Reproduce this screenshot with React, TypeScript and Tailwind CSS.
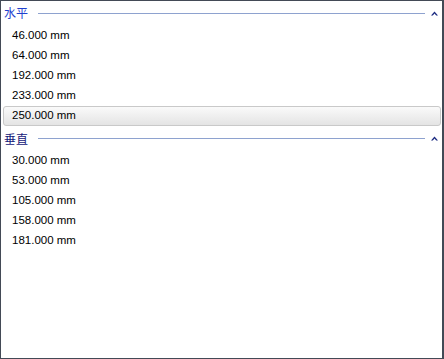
import React from "react";

const Chevron = () => (
  <svg width="7" height="5" viewBox="0 0 7 5" className="shrink-0">
    <path d="M0 4.5 L3.5 0.5 L7 4.5 L5.2 4.5 L3.5 2.6 L1.8 4.5 Z" fill="#1b2a80" />
  </svg>
);

const Header = ({ label, color, h }: { label: string; color: string; h: string }) => (
  <div className={"flex items-center pl-[3px] pr-[4px] " + h}>
    <span
      className="text-[12px] leading-none"
      style={{ color, fontFamily: '"Noto Sans CJK SC", sans-serif' }}
    >
      {label}
    </span>
    <div className="ml-[10px] h-px flex-1 bg-[#8ea2cf]" />
    <div className="ml-[6px] flex items-center">
      <Chevron />
    </div>
  </div>
);

const Row = ({ text, selected }: { text: string; selected?: boolean }) => (
  <div
    className={
      "flex h-[20px] items-center pl-[8px] text-[11.5px] text-black " +
      (selected
        ? "rounded-[3px] border border-[#c9c9c9] bg-gradient-to-b from-[#fafafa] to-[#e4e4e4]"
        : "border border-transparent")
    }
  >
    <span>{text}</span>
  </div>
);

export default function App() {
  const h = ["46.000 mm", "64.000 mm", "192.000 mm", "233.000 mm", "250.000 mm"];
  const v = ["30.000 mm", "53.000 mm", "105.000 mm", "158.000 mm", "181.000 mm"];
  return (
    <div
      className="h-[359px] w-[444px] border border-r-2 border-[#434a56] bg-white"
      style={{ fontFamily: '"Liberation Sans", "Noto Sans CJK SC", sans-serif' }}
    >
      <div>
        <Header label="水平" color="#1f3fcf" h="h-[24px]" />
        <div className="pl-[2px] pr-[1px] pt-[1px]">
          {h.map((t, i) => (
            <Row key={t} text={t} selected={i === 4} />
          ))}
        </div>
        <Header label="垂直" color="#14207a" h="h-[25px]" />
        <div className="pl-[2px] pr-[1px]">
          {v.map((t) => (
            <Row key={t} text={t} />
          ))}
        </div>
      </div>
    </div>
  );
}
